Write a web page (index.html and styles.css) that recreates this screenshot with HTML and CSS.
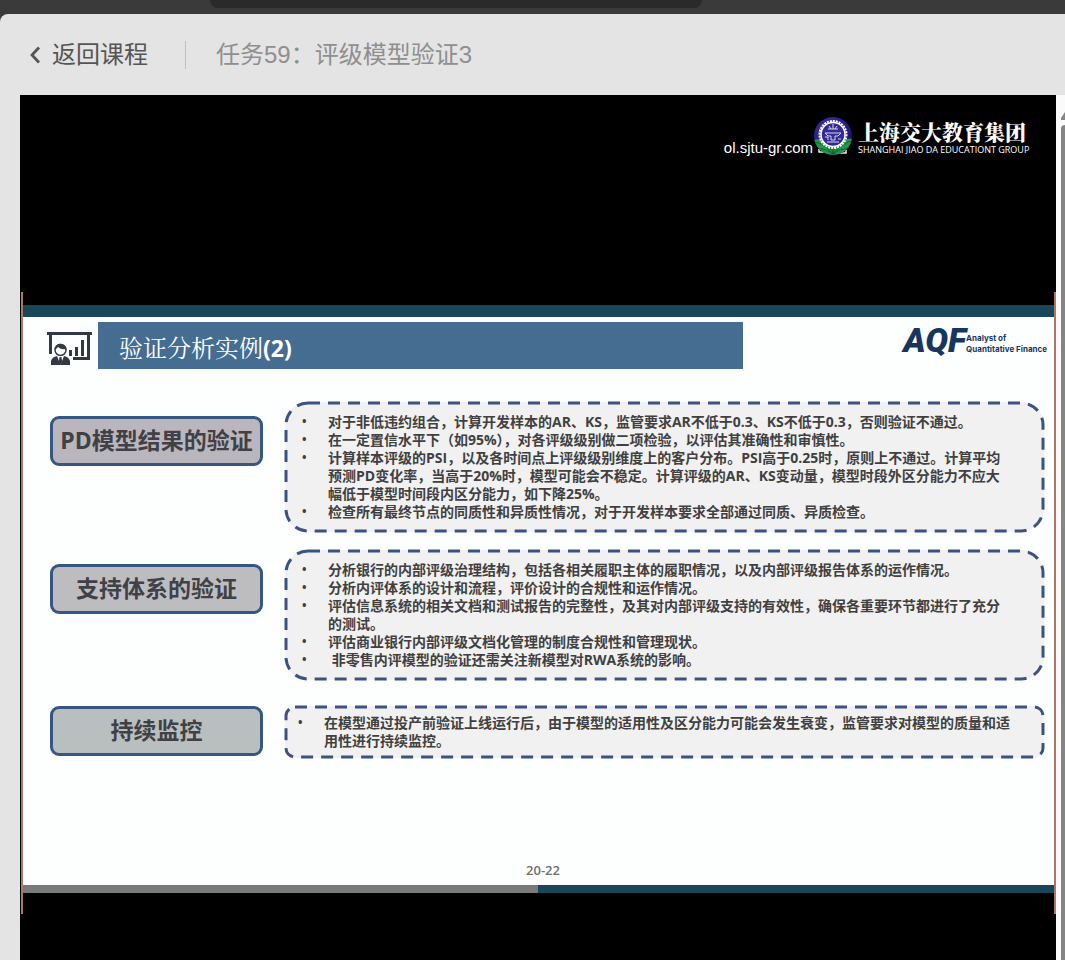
FILE: index.html
```
<!DOCTYPE html>
<html lang="zh-CN">
<head>
<meta charset="utf-8">
<title>任务59：评级模型验证3</title>
<link rel="stylesheet" href="styles.css">
</head>
<body>
<div class="topbar"><div class="topbar-tab"></div></div>
<div class="panel">
  <header class="course-head">
    <a class="back" href="#">
      <svg width="12" height="18" viewBox="0 0 12 18"><path d="M10 1.500 3 9l7 7.500" fill="none" stroke="#555" stroke-width="2.800"/></svg>
      <span>返回课程</span>
    </a>
    <h1 class="task">任务59：评级模型验证3</h1>
  </header>
  <div class="stage">
    <main class="video">
      <div class="brand">
        <span class="site">ol.sjtu-gr.com</span>
        <svg class="emblem" width="40" height="40" viewBox="0 0 40 40">
          <defs>
            <radialGradient id="ball" cx="40%" cy="35%" r="65%"><stop offset="0" stop-color="#4b40ad"/><stop offset=".6" stop-color="#2c208d"/><stop offset="1" stop-color="#171063"/></radialGradient>
            <clipPath id="disc"><circle cx="20" cy="20" r="19"/></clipPath>
          </defs>
          <path d="M6 33v3h5M26 37h7v-3" stroke="#eee" stroke-width="1.500" fill="none"/>
          <circle cx="20" cy="20" r="19" fill="url(#ball)"/>
          <g clip-path="url(#disc)">
            <path d="M0 24q10-3 20 6 10-9 20-7v17H0z" fill="#21974b"/>
            <path d="M2 26q11 2 18 13Q27 28 38 25M20 39V27M5 33q9-1 15 6 6-7 15-6M11 25q8 4 9 14 1-10 9-14" stroke="#116439" fill="none"/>
          </g>
          <circle cx="20" cy="18.500" r="11.500" fill="#352a94"/>
          <circle cx="20" cy="18.500" r="13.500" fill="none" stroke="#fff" stroke-width="2" stroke-dasharray="2 1"/>
          <circle cx="20" cy="18.500" r="12" fill="none" stroke="#fff" stroke-width="1.500"/>
          <path d="M20 8v5M16 10l2 3M24 10l-2 3M15 13h10M12 17h16l-3 3h-3v4h-4v-4h-3zM12 21h3v3M25 23h3M14 26h12" fill="none" stroke="#d5d6f2" stroke-width="1"/>
        </svg>
        <div class="brand-name">
          <strong>上海交大教育集团</strong>
          <span>SHANGHAI JIAO DA EDUCATIONT GROUP</span>
        </div>
      </div>
      <section class="frame">
        <div class="slide">
          <div class="slide-head">
            <svg class="presenter" width="46" height="36" viewBox="0 0 46 36">
              <g fill="#333942">
                <path d="M0 1h45v3H0zM2 4h3v19H2zM40 4h3v25H26v-3h14zM22 19h3v6h-3zM28 16h3v9h-3zM34 9h3v16h-3z"/>
                <path d="M4 34v-4q1-4 6-5h7q5 1 6 5v4z"/>
              </g>
              <circle cx="13.500" cy="19" r="5.500" fill="#fff" stroke="#333942" stroke-width="1.500"/>
              <path d="M8 18q1-6 7-5 4 1 4 5-5 1-8-2-1 2-3 2z" fill="#333942"/>
              <path d="M10 25l3.500 9L17 25z" fill="#fff"/><path d="M12.500 26h2l.7 5-1.700 3-1.700-3z" fill="#333942"/>
            </svg>
            <h2 class="banner">验证分析实例<b>(2)</b></h2>
            <div class="aqf"><strong>AQF</strong><span>Analyst of<br>Quantitative Finance</span></div>
          </div>
          <div class="rows">
            <div class="row">
              <h3 class="pill mauve">PD模型结果的验证</h3>
              <div class="note">
                <svg class="dash"><rect width="100%" height="100%" rx="22"/></svg>
                <ul>
                  <li>对于非低违约组合，计算开发样本的AR、KS，监管要求AR不低于0.3、KS不低于0.3，否则验证不通过。</li>
                  <li>在一定置信水平下（如95%），对各评级级别做二项检验，以评估其准确性和审慎性。</li>
                  <li>计算样本评级的PSI，以及各时间点上评级级别维度上的客户分布。PSI高于0.25时，原则上不通过。计算平均<br>预测PD变化率，当高于20%时，模型可能会不稳定。计算评级的AR、KS变动量，模型时段外区分能力不应大<br>幅低于模型时间段内区分能力，如下降25%。</li>
                  <li>检查所有最终节点的同质性和异质性情况，对于开发样本要求全部通过同质、异质检查。</li>
                </ul>
              </div>
            </div>
            <div class="row">
              <h3 class="pill">支持体系的验证</h3>
              <div class="note">
                <svg class="dash"><rect width="100%" height="100%" rx="22"/></svg>
                <ul>
                  <li>分析银行的内部评级治理结构，包括各相关履职主体的履职情况，以及内部评级报告体系的运作情况。</li>
                  <li>分析内评体系的设计和流程，评价设计的合规性和运作情况。</li>
                  <li>评估信息系统的相关文档和测试报告的完整性，及其对内部评级支持的有效性，确保各重要环节都进行了充分<br>的测试。</li>
                  <li>评估商业银行内部评级文档化管理的制度合规性和管理现状。</li>
                  <li>&nbsp;非零售内评模型的验证还需关注新模型对RWA系统的影响。</li>
                </ul>
              </div>
            </div>
            <div class="row short">
              <h3 class="pill green">持续监控</h3>
              <div class="note">
                <svg class="dash"><rect width="100%" height="100%" rx="9"/></svg>
                <ul>
                  <li>在模型通过投产前验证上线运行后，由于模型的适用性及区分能力可能会发生衰变，监管要求对模型的质量和适<br>用性进行持续监控。</li>
                </ul>
              </div>
            </div>
          </div>
          <p class="page-no">20-22</p>
          <div class="progress"></div>
        </div>
      </section>
    </main>
    <div class="scroll">
      <svg width="4" height="8" viewBox="0 0 4 8"><path d="M4 0v8H0V6z" fill="#858585"/></svg>
      <div class="thumb"></div>
    </div>
  </div>
</div>
</body>
</html>
```
FILE: styles.css
```
* { box-sizing: border-box; }
body {
  margin: 0;
  min-height: 100vh;
  display: flex;
  flex-direction: column;
  background: #3a3a3a;
  font-family: "Liberation Sans", "Noto Sans CJK SC", sans-serif;
  overflow: hidden;
}
h1, h2, h3, p, ul { margin: 0; padding: 0; }
.topbar { height: 14px; padding-left: 210px; }
.topbar-tab { width: 492px; height: 8px; background: #2a2a2a; border-radius: 0 0 20px 20px; }
.panel {
  flex: 1;
  display: flex;
  flex-direction: column;
  background: #e4e4e4;
  border-radius: 8px 0 0 0;
}
.course-head { height: 81px; display: flex; align-items: center; padding-left: 29px; }
.back {
  display: flex;
  align-items: center;
  gap: 11px;
  padding-right: 37px;
  color: #555;
  font-size: 24px;
  line-height: 28px;
  text-decoration: none;
}
.task {
  border-left: 1px solid #bfbfbf;
  padding-left: 30px;
  color: #8f8f8f;
  font-size: 24px;
  line-height: 28px;
  font-weight: 400;
}
.stage { flex: 1; display: flex; padding-left: 20px; }
.video { flex: 1; background: #000; }
.scroll { width: 9px; padding: 17px 0 0 5px; background: #fafafa; display: flex; flex-direction: column; gap: 5px; }
.scroll svg { display: block; flex: none; }
.thumb { flex: 1; background: #858585; border-radius: 4px 0 0 0; }

.brand { height: 197px; display: flex; justify-content: flex-end; padding: 21px 25px 0 0; color: #fff; }
.site { font-size: 15px; line-height: 18px; padding-top: 23px; }
.emblem { display: block; }
.brand-name { display: flex; flex-direction: column; width: 178px; padding: 3px 0 0 5px; white-space: nowrap; }
.brand-name strong { font: 900 21px/24px "Noto Serif CJK SC", "Noto Sans CJK SC", sans-serif; }
.brand-name span { font: 9px/14px "Open Sans", sans-serif; }

.frame { margin-left: 1px; padding: 13px 0 21px; border: 2px solid #aa7863; border-width: 0 2px; }
.slide { background: #fdfefe; border-top: 12px solid #1a465a; }
.slide-head { display: flex; align-items: flex-start; padding: 5px 7px 0 24px; }
.presenter { margin-top: 9px; flex: none; }
.banner {
  flex: 0 1 645px;
  margin-left: 5px;
  height: 47px;
  padding-left: 21px;
  background: #456c91;
  color: #fff;
  font: 400 24px/52px "Open Sans", "Noto Serif CJK SC", "Noto Sans CJK SC", sans-serif;
}
.banner b { font-size: 23px; }
.aqf { display: flex; margin-left: auto; color: #17365f; white-space: nowrap; }
.aqf strong { font: italic 900 34px/36px Roboto, sans-serif; }
.aqf span { font: 700 8px/11px Inter, sans-serif; padding-top: 11px; }

.rows { display: flex; flex-direction: column; gap: 18px; padding: 33px 10px 0 27px; }
.row { display: flex; align-items: flex-start; gap: 22px; }
.pill {
  flex: 0 0 213px;
  margin-top: 14px;
  height: 50px;
  border: 3px solid #365684;
  border-radius: 9px;
  background: #bdbdc0;
  color: #404146;
  text-align: center;
  font: 700 23px/43px "Open Sans", "Noto Sans CJK SC", sans-serif;
  white-space: nowrap;
}
.mauve { background: #bab6bd; }
.green { background: #b9bfbf; }
.note {
  flex: 1;
  position: relative;
  min-height: 130px;
  padding: 11px 0 8px 17px;
  background: #f1f1f2;
  border-radius: 23px;
}
.dash { position: absolute; inset: 1px; width: calc(100% - 2px); height: calc(100% - 2px); overflow: visible; }
.dash rect { fill: none; stroke: #3b5382; stroke-width: 3px; stroke-dasharray: 12 8; }
.note ul { list-style: none; color: #404040; font: 700 14px/18px "Open Sans", "Noto Sans CJK SC", sans-serif; white-space: nowrap; }
.note li { display: flex; }
.note li::before { content: "•"; flex: 0 0 26px; font-size: 12px; }
.short { margin-top: 8px; }
.short .pill { margin-top: 0; }
.short .note { min-height: 52px; padding: 8px 0 8px 13px; border-radius: 10px; }
.page-no { padding: 103px 0 6px 9px; text-align: center; color: #707070; font: 600 13px/18px "Open Sans", sans-serif; }
.progress { height: 8px; background: linear-gradient(90deg, #797b7a 50%, #1a465a 50%); }
```
